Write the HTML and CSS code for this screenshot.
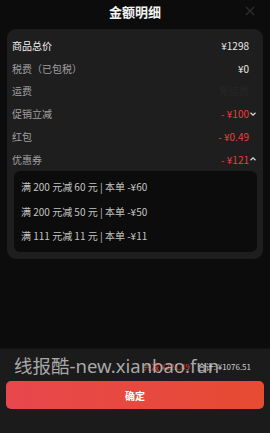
FILE: index.html
```html
<!DOCTYPE html>
<html lang="zh">
<head>
<meta charset="utf-8">
<link rel="stylesheet" href="styles.css">
</head>
<body>
<div class="page">
  <div class="header">
    <div class="title">金额明细</div>
    <div class="close">
      <svg width="10" height="10" viewBox="0 0 10 10"><path d="M1 1L9 9M9 1L1 9" stroke="#2e2e2e" stroke-width="1.3" fill="none"/></svg>
    </div>
  </div>
  <div class="card">
    <div class="row main"><span>商品总价</span><span class="val">¥1298<i class="sp"></i></span></div>
    <div class="row"><span>税费（已包税）</span><span class="val light">¥0<i class="sp"></i></span></div>
    <div class="row"><span>运费</span><span class="val dim">免运费<i class="sp"></i></span></div>
    <div class="row"><span>促销立减</span><span class="val red">- ¥100<svg class="arr" viewBox="0 0 8 8"><path d="M1.5 2.8L4 5.2L6.5 2.8" stroke="#ddd" stroke-width="1.2" fill="none"/></svg></span></div>
    <div class="row"><span>红包</span><span class="val red">- ¥0.49<i class="sp"></i></span></div>
    <div class="row"><span>优惠券</span><span class="val red">- ¥121<svg class="arr" viewBox="0 0 8 8"><path d="M1.5 5.2L4 2.8L6.5 5.2" stroke="#ddd" stroke-width="1.2" fill="none"/></svg></span></div>
    <div class="coupons">
      <div class="coupon">满 200 元减 60 元 | 本单 -¥60</div>
      <div class="coupon">满 200 元减 50 元 | 本单 -¥50</div>
      <div class="coupon">满 111 元减 11 元 | 本单 -¥11</div>
    </div>
  </div>
  <div class="spacer"></div>
  <div class="footer">
    <div class="summary"><span class="red">共减 ¥221.49</span><span class="total">合计: ¥1076.51</span></div>
    <button class="confirm">确定</button>
    <div class="watermark">线报酷-new.xianbao.fun</div>
  </div>
</div>
</body>
</html>
```
FILE: styles.css
```css
* { box-sizing: border-box; }
html, body { margin: 0; padding: 0; }
body {
  background: #0c0c0c;
  font-family: "Noto Sans CJK SC", "Noto Sans", sans-serif;
  color: #e6e6e6;
}
.page {
  width: 270px;
  height: 433px;
  display: flex;
  flex-direction: column;
}
.header {
  position: relative;
  height: 26px;
  display: flex;
  align-items: center;
  justify-content: center;
}
.title {
  font-size: 13px;
  font-weight: 700;
  color: #f2f2f2;
  line-height: 26px;
  margin-top: -3px;
}
.close {
  position: absolute;
  right: 15px;
  top: 6px;
  width: 10px;
  height: 10px;
  display: flex;
}
.card {
  margin: 3px 7px 0;
  background: #1e1e1e;
  border-radius: 9px;
  padding: 5px 6px 7px 5px;
}
.row {
  height: 22.8px;
  display: flex;
  align-items: center;
  justify-content: space-between;
  font-size: 10px;
  color: #a0a0a0;
}
.row.main { color: #f0f0f0; }
.val {
  display: flex;
  align-items: center;
  color: #e8e8e8;
}
.val.light { color: #e8e8e8; }
.val.dim { color: #262626; }
.val.red { color: #e5413c; }
.sp { display: inline-block; width: 8px; }
.arr { width: 8px; height: 8px; }
.coupons {
  margin: 0 0 0 2px;
  background: #0c0c0c;
  border-radius: 6px;
  padding: 4px 0 4px 7px;
}
.coupon {
  height: 24.3px;
  display: flex;
  align-items: center;
  font-size: 10px;
  color: #c4c4c4;
}
.spacer { flex: 1; }
.footer {
  position: relative;
  background: #1b1b1b;
  border-top: 1px solid #121212;
  height: 85px;
  padding: 9px 6px 0;
}
.summary {
  height: 16px;
  display: flex;
  justify-content: flex-end;
  align-items: center;
  gap: 8px;
  padding-right: 13px;
  font-size: 8px;
  color: #cfcfcf;
}
.red { color: #e5413c; }
.confirm {
  margin-top: 7px;
  width: 100%;
  height: 28px;
  border: none;
  border-radius: 5px;
  background: linear-gradient(90deg, #e8474c, #e64b33);
  color: #fff;
  font-family: "Noto Sans CJK SC", sans-serif;
  font-size: 10px;
  font-weight: 700;
  padding: 0;
}
.watermark {
  position: absolute;
  left: 14px;
  top: 3px;
  font-family: "Noto Sans", "Noto Sans CJK SC", sans-serif;
  font-size: 18.5px;
  color: rgba(210, 210, 210, 0.78);
  white-space: nowrap;
  pointer-events: none;
}
```
